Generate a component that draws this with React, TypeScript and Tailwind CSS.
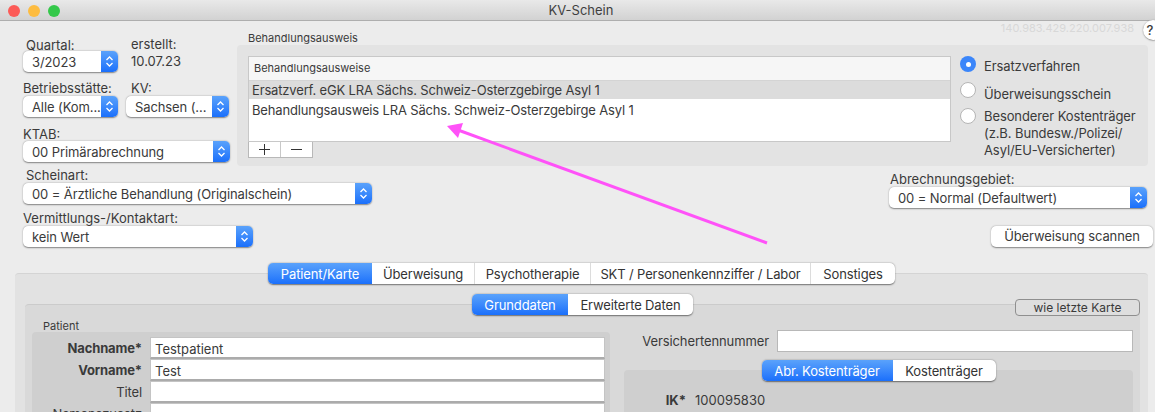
import React from "react";

const font = "font-['Inter','Liberation_Sans',sans-serif]";

function Chevrons() {
  return (
    <svg width="9" height="13" viewBox="0 0 9 13" fill="none" stroke="white" strokeWidth="1.3">
      <path d="M1.5 5 L4.5 2 L7.5 5" />
      <path d="M1.5 8 L4.5 11 L7.5 8" />
    </svg>
  );
}

function Select({ value, className = "" }: { value: string; className?: string }) {
  return (
    <div className={`flex h-[21px] rounded-[5px] bg-white shadow-[0_0.5px_1.5px_rgba(0,0,0,0.45)] overflow-hidden ${className}`}>
      <div className="flex-1 pl-[9px] leading-[22px] text-[13px] tracking-[-0.1px] text-[#3a3a3a] whitespace-nowrap overflow-hidden">{value}</div>
      <div className="w-[17px] flex items-center justify-center bg-gradient-to-b from-[#5aa2fb] to-[#1a6ffb]">
        <Chevrons />
      </div>
    </div>
  );
}

function Segmented({ items }: { items: { t: string; w: string }[] }) {
  return (
    <div className="flex h-[21px] rounded-[5px] bg-white shadow-[0_0.5px_1.5px_rgba(0,0,0,0.5)] overflow-hidden text-[13px] tracking-[-0.13px] leading-[22px] text-[#333]">
      {items.map((it, i) => (
        <div
          key={it.t}
          className={`${it.w} text-center whitespace-nowrap ${
            i === 0 ? "text-white bg-gradient-to-b from-[#5aa2fb] to-[#1a6ffb]" : i > 1 ? "border-l border-[#dcdcdc]" : ""
          }`}
        >
          {it.t}
        </div>
      ))}
    </div>
  );
}

function Radio({ on }: { on?: boolean }) {
  return on ? (
    <div className="w-4 h-4 rounded-full bg-[#3b86fa] flex items-center justify-center shrink-0">
      <div className="w-[5px] h-[5px] rounded-full bg-white" />
    </div>
  ) : (
    <div className="w-4 h-4 rounded-full bg-white border border-[#b5b5b5] shrink-0" />
  );
}

function Field({ label, value, bold }: { label: string; value?: string; bold?: boolean }) {
  return (
    <div className="flex h-[22px]">
      <div className={`w-[110px] pr-[8px] text-right leading-[23px] text-[13px] tracking-[-0.13px] text-[#3a3a3a] whitespace-nowrap ${bold ? "font-bold" : ""}`}>
        {label}
      </div>
      <div className="w-[455px] h-[22px] bg-white border-x border-t border-b-2 border-[#ababab] border-t-[#c4c4c4] border-x-[#c4c4c4] pl-[4px] text-[13px] leading-[22px] text-[#3a3a3a]">
        {value}
      </div>
    </div>
  );
}

export default function App() {
  return (
    <div className={`${font} relative w-[1155px] h-[412px] overflow-hidden bg-[#ececec] text-[#3a3a3a]`}>
      {/* title bar */}
      <div className="relative h-[21px] pl-[7px] pt-[1px] flex items-center justify-center bg-gradient-to-b from-[#e9e9e9] to-[#d2d2d2] border-b border-[#aeaeae] text-[13px] text-[#3f3f3f]">
        <div className="absolute left-[8px] top-[5px] flex gap-[8px]">
          <div className="w-3 h-3 rounded-full bg-[#fc5b57]" />
          <div className="w-3 h-3 rounded-full bg-[#fdbc40]" />
          <div className="w-3 h-3 rounded-full bg-[#34c84a]" />
        </div>
        KV-Schein
      </div>

      <div className="absolute right-[21px] top-[21px] text-[11px] leading-[14px] text-[#d8d8d8]">140.983.429.220.007.938</div>
      <div className="absolute left-[1143px] top-[20px] w-[20px] h-[20px] rounded-full bg-white shadow-[0_0.5px_1.5px_rgba(0,0,0,0.5)] text-center text-[13px] leading-[20px] font-medium pr-[6px]">?</div>

      {/* top */}
      <div className="flex pt-[16px] pl-[23px]">
        <div className="w-[207px] text-[13px]">
          <div className="flex h-[14px] leading-[14px]">
            <div className="w-[108px] pl-[3px] mt-[1px]">Quartal:</div>
            <div>erstellt:</div>
          </div>
          <div className="flex">
            <Select value="3/2023" className="w-[95px]" />
            <div className="ml-[13px] leading-[21px]">10.07.23</div>
          </div>
          <div className="flex mt-[9px] h-[15px] leading-[15px]">
            <div className="w-[108px]">Betriebsstätte:</div>
            <div>KV:</div>
          </div>
          <div className="flex">
            <Select value="Alle (Kom..." className="w-[95px]" />
            <Select value="Sachsen (..." className="w-[103px] ml-[8px]" />
          </div>
          <div className="mt-[10px] h-[14px] leading-[14px]">KTAB:</div>
          <Select value="00 Primärabrechnung" className="w-[207px]" />
        </div>

        <div className="ml-[7px] w-[911px]">
          <div className="pl-[11px] h-[8px] text-[11px] leading-[2px]">Behandlungsausweis</div>
          <div className="h-[121px] rounded-[4px] bg-[#e3e3e3] flex pt-[11px] pl-[11px]">
            <div className="w-[703px]">
              <div className="h-[86px] bg-white border border-[#c8c8c8]">
                <div className="h-[24px] bg-[#f6f6f6] border-b border-[#d4d4d4] pl-[5px] text-[11px] leading-[22px]">Behandlungsausweise</div>
                <div className="h-[18px] bg-[#dcdcdc] pl-[3px] text-[13px] tracking-[-0.16px] leading-[18px]">Ersatzverf. eGK LRA Sächs. Schweiz-Osterzgebirge Asyl 1</div>
                <div className="h-[19px] pl-[3px] text-[13px] tracking-[-0.16px] leading-[23px]">Behandlungsausweis LRA Sächs. Schweiz-Osterzgebirge Asyl 1</div>
              </div>
              <div className="flex w-[65px] h-[16px] bg-white border border-t-0 border-[#b8b8b8] text-[#333]">
                <div className="w-[32px] border-r border-[#c8c8c8] flex items-center justify-center">
                  <svg width="13" height="13" viewBox="0 0 13 13" stroke="#333" strokeWidth="1"><path d="M6.5 1V12M1 6.5H12" /></svg>
                </div>
                <div className="flex-1 flex items-center justify-center">
                  <svg width="13" height="13" viewBox="0 0 13 13" stroke="#333" strokeWidth="1"><path d="M1 6.5H12" /></svg>
                </div>
              </div>
            </div>
            <div className="ml-[9px] text-[13px] tracking-[-0.1px] text-[#3a3a3a]">
              <div className="flex h-[16px] leading-[16px]"><Radio on /><span className="ml-[8px] relative top-[2px]">Ersatzverfahren</span></div>
              <div className="flex h-[16px] leading-[16px] mt-[10px]"><Radio /><span className="ml-[8px] relative top-[4px]">Überweisungsschein</span></div>
              <div className="flex mt-[10px]">
                <Radio />
                <div className="ml-[8px] leading-[17px] whitespace-nowrap">
                  <div>Besonderer Kostenträger</div>
                  <div>(z.B. Bundesw./Polizei/</div>
                  <div>Asyl/EU-Versicherter)</div>
                </div>
              </div>
            </div>
          </div>
        </div>
      </div>

      {/* middle */}
      <div className="flex justify-between pl-[23px] pr-[2px] text-[13px] mt-[3px]">
        <div className="w-[349px]">
          <div className="pl-[3px] h-[14px] leading-[13px]">Scheinart:</div>
          <Select value="00 = Ärztliche Behandlung (Originalschein)" className="w-[349px]" />
          <div className="mt-[7px] h-[15px] leading-[15px]">Vermittlungs-/Kontaktart:</div>
          <Select value="kein Wert" className="w-[230px]" />
        </div>
        <div className="w-[264px] pt-[3px]">
          <div className="pl-[1px] h-[15px] leading-[14px]">Abrechnungsgebiet:</div>
          <Select value="00 = Normal (Defaultwert)" className="w-[258px]" />
          <div className="mt-[18px] ml-[102px] w-[162px] h-[21px] rounded-[5px] bg-white shadow-[0_0.5px_1.5px_rgba(0,0,0,0.45)] text-center leading-[20px] tracking-[-0.1px]">Überweisung scannen</div>
        </div>
      </div>

      {/* lower panel */}
      <div className="ml-[15px] w-[1133px] mt-[26px] h-[140px] rounded-t-[4px] bg-[#e2e2e2] border-t border-[#d4d4d4] pl-[10px] pr-[8px]">
        <div className="flex justify-center pr-[2px] -mt-[11px]">
          <Segmented
            items={[
              { t: "Patient/Karte", w: "w-[104px]" },
              { t: "Überweisung", w: "w-[102px]" },
              { t: "Psychotherapie", w: "w-[116px]" },
              { t: "SKT / Personenkennziffer / Labor", w: "w-[220px]" },
              { t: "Sonstiges", w: "w-[85px]" },
            ]}
          />
        </div>
        <div className="relative mt-[20px] h-[120px] rounded-t-[4px] bg-[#d9d9d9] border-t border-[#cbcbcb]">
          <div className="flex justify-center -mt-[11px]">
            <Segmented
              items={[
                { t: "Grunddaten", w: "w-[96px]" },
                { t: "Erweiterte Daten", w: "w-[125px]" },
              ]}
            />
          </div>
          <div className="absolute right-0 -top-[6px] w-[125px] h-[17px] rounded-[4px] border border-[#8f8f8f] bg-[#dedede] text-[12px] text-center leading-[16px]">wie letzte Karte</div>
          <div className="flex">
            <div className="ml-[7px] w-[578px]">
              <div className="pl-[11px] h-[17px] text-[11px] leading-[22px]">Patient</div>
              <div className="rounded-t-[4px] bg-[#cfcfcf] pt-[5px] pl-[8px]">
                <Field label="Nachname*" value="Testpatient" bold />
                <Field label="Vorname*" value="Test" bold />
                <Field label="Titel" />
                <Field label="Namenszusatz" />
              </div>
            </div>
            <div className="ml-[14px] w-[509px]">
              <div className="flex h-[22px] mt-[15px] text-[13px] tracking-[-0.1px] leading-[22px]">
                <div className="w-[153px] pr-[8px] text-right whitespace-nowrap">Versichertennummer</div>
                <div className="w-[356px] bg-white border border-[#b8b8b8]" />
              </div>
              <div className="mt-[18px] rounded-t-[4px] bg-[#cfcfcf] h-[60px]">
                <div className="flex justify-center -translate-y-[10px]">
                  <Segmented
                    items={[
                      { t: "Abr. Kostenträger", w: "w-[131px]" },
                      { t: "Kostenträger", w: "w-[103px]" },
                    ]}
                  />
                </div>
                <div className="flex text-[13px] -mt-[1px] leading-[20px]">
                  <div className="w-[62px] text-right font-bold">IK*</div>
                  <div className="ml-[9px]">100095830</div>
                </div>
              </div>
            </div>
          </div>
        </div>
      </div>

      {/* annotation arrow */}
      <svg className="absolute left-0 top-0 pointer-events-none" width="1155" height="412" fill="none">
        <path d="M767 243 L458 130" stroke="#ff52f8" strokeWidth="3" />
        <path d="M447 126 L463 123 L458 138 Z" fill="#ff52f8" />
      </svg>
    </div>
  );
}
